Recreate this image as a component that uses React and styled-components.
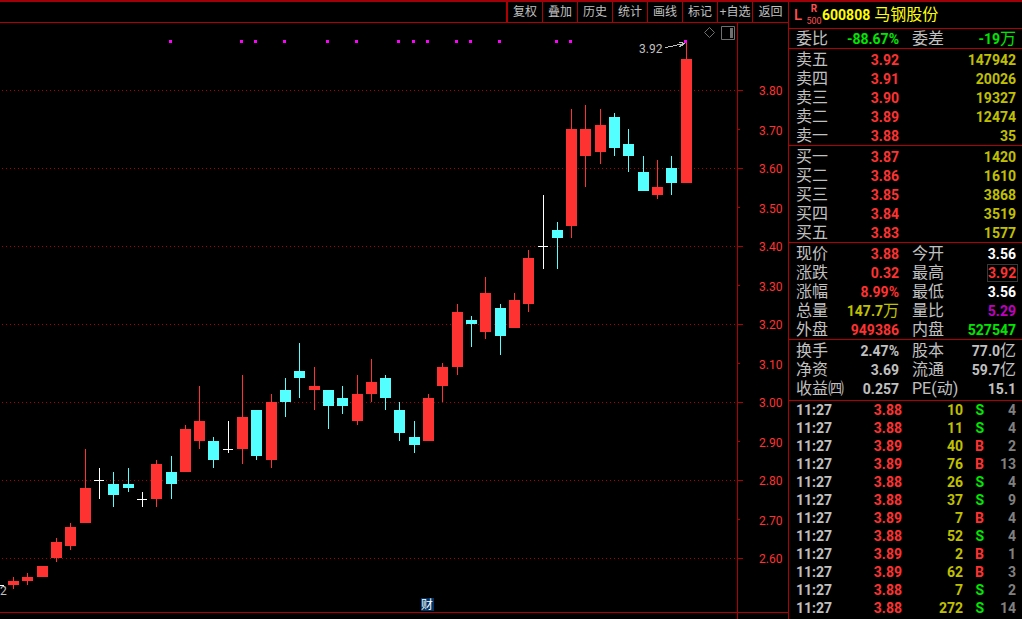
import React, { useState } from 'react';
import styled, { createGlobalStyle } from 'styled-components';

const LINE = '#b00000';
const RED = '#ff3232';
const CYAN = '#54ffff';
const YELLOW = '#c0c000';
const GREEN = '#00e600';
const GRAY = '#c0c0c0';
const PURPLE = '#c000c0';

const GlobalStyle = createGlobalStyle`
    * {
        box-sizing: border-box;
    }
    body {
        margin: 0;
        background: #000;
        color: ${GRAY};
        font-family: Roboto, "Noto Sans CJK SC", sans-serif;
        font-size: 14px;
    }
`;

const Screen = styled.div`
    display: flex;
    min-height: 100vh;
    border-top: 2px solid #a00008;
`;

const Main = styled.main`
    flex: 1;
    min-width: 0;
    display: flex;
    flex-direction: column;
`;

const Toolbar = styled.nav`
    display: flex;
    justify-content: flex-end;
    height: 21px;
    border-bottom: 1px solid ${LINE};
`;

const ToolButton = styled.button`
    width: 35px;
    padding: 0;
    border: 0;
    border-left: 1px solid ${LINE};
    background: none;
    color: ${GRAY};
    font: 12px/20px "Liberation Sans", "Noto Sans CJK SC", sans-serif;
    white-space: nowrap;
    cursor: pointer;
    &:first-child {
        width: 36px;
        border-left-width: 2px;
    }
    &:last-child {
        width: 36px;
    }
`;

const ChartArea = styled.section`
    position: relative;
    flex: 1;
    svg {
        display: block;
    }
`;

const Chart = styled.svg`
    width: 100%;
    text {
        font: 12px Roboto, "Noto Sans CJK SC", sans-serif;
    }
`;

// petits boutons au dessus du graphique
const ChartTools = styled.div`
    position: absolute;
    top: 3px;
    right: 52px;
    display: flex;
    gap: 6px;
    button {
        padding: 0;
        border: 0;
        background: none;
        cursor: pointer;
    }
`;

const Side = styled.aside`
    width: 234px;
    border-left: 1px solid ${LINE};
`;

const Header = styled.h1`
    display: flex;
    align-items: center;
    height: 27px;
    margin: 0;
    padding-left: 5px;
    border-bottom: 1px solid ${LINE};
    color: #ffff00;
    font-size: 14px;
    line-height: 26px;
`;

const Flag = styled.span`
    width: 12px;
    color: #ff5050;
    font-size: 15px;
    font-weight: 500;
`;

const Margin = styled.span`
    display: flex;
    flex-direction: column;
    align-items: center;
    width: 16px;
    color: #ff5050;
    font-size: 9px;
    font-weight: 400;
    line-height: 12px;
    b {
        font-size: 10px;
        line-height: 12px;
    }
`;

const StockName = styled.span`
    margin-left: 4px;
    font-size: 16px;
    font-weight: 400;
`;

const Block = styled.div`
    padding: ${(props) => props.$pad || '1px 6px 0 7px'};
    border-bottom: 1px solid ${LINE};
`;

const Table = styled.table`
    width: 100%;
    table-layout: fixed;
    border-collapse: collapse;
    th, td {
        height: 19px;
        padding: 0;
        line-height: 18px;
        white-space: nowrap;
    }
`;

const Label = styled.th`
    width: 48px;
    font-size: 16px;
    font-weight: 400;
    text-align: left;
`;

const Value = styled.td`
    width: ${(props) => props.$w || 'auto'};
    color: ${(props) => props.$color || GRAY};
    font-weight: 700;
    text-align: ${(props) => props.$align || 'right'};
`;

const Gap = styled.td`
    width: 13px;
`;

const Unit = styled.span`
    font-size: 16px;
    font-weight: 400;
`;

const Boxed = styled.span`
    display: block;
    width: 31px;
    height: 18px;
    margin: 0 -2px 0 auto;
    padding-right: 1px;
    border: 1px solid #383838;
    line-height: 16px;
`;

const Trades = styled(Table)`
    td {
        height: 18px;
        line-height: 18px;
    }
`;

const TradeBlock = styled.div`
    padding: 0 6px 0 7px;
`;

const tools = ['复权', '叠加', '历史', '统计', '画线', '标记', '+自选', '返回'];

// [type, x, open/close haut, open/close bas, plus haut, plus bas]
const candles = [
    ['r', 8, 581, 585, 577, 589],
    ['r', 22, 577, 581, 573, 585],
    ['r', 37, 566, 577, 566, 577],
    ['r', 51, 542, 558, 538, 562],
    ['r', 65, 527, 546, 523, 550],
    ['r', 80, 488, 523, 449, 523],
    ['w', 94, 480, 481, 468, 499],
    ['c', 108, 484, 495, 472, 507],
    ['c', 123, 484, 488, 468, 492],
    ['w', 137, 499, 500, 492, 507],
    ['r', 151, 464, 499, 460, 507],
    ['c', 166, 472, 484, 456, 499],
    ['r', 180, 429, 472, 425, 472],
    ['r', 194, 421, 441, 386, 449],
    ['c', 208, 441, 460, 437, 468],
    ['w', 223, 449, 450, 421, 453],
    ['r', 237, 417, 449, 375, 464],
    ['c', 251, 410, 456, 410, 460],
    ['r', 266, 402, 460, 394, 468],
    ['c', 280, 390, 402, 378, 417],
    ['c', 294, 371, 378, 343, 398],
    ['r', 309, 386, 390, 367, 410],
    ['c', 323, 390, 406, 390, 429],
    ['c', 337, 398, 406, 386, 414],
    ['r', 352, 394, 421, 375, 425],
    ['r', 366, 382, 394, 359, 402],
    ['c', 380, 378, 398, 375, 410],
    ['c', 394, 410, 433, 402, 441],
    ['c', 409, 437, 445, 421, 453],
    ['r', 423, 398, 441, 394, 441],
    ['r', 437, 367, 386, 363, 402],
    ['r', 452, 312, 367, 304, 375],
    ['c', 466, 320, 324, 316, 347],
    ['r', 480, 293, 332, 277, 339],
    ['c', 495, 308, 336, 304, 355],
    ['r', 509, 300, 328, 293, 328],
    ['r', 523, 258, 304, 250, 312],
    ['w', 538, 246, 247, 195, 269],
    ['c', 552, 230, 238, 222, 269],
    ['r', 566, 129, 226, 109, 238],
    ['r', 580, 129, 156, 105, 187],
    ['r', 595, 125, 152, 109, 164],
    ['c', 609, 117, 148, 113, 156],
    ['c', 623, 144, 156, 129, 172],
    ['c', 638, 172, 191, 156, 191],
    ['r', 652, 187, 195, 160, 199],
    ['c', 666, 168, 183, 156, 195],
    ['r', 681, 59, 183, 41, 183],
];

const dots = [169, 240, 254, 283, 326, 355, 397, 412, 426, 455, 469, 498, 555, 569, 684];

const candleColors = { r: RED, c: CYAN, w: '#ffffff' };

const sells = [
    ['卖五', '3.92', '147942'],
    ['卖四', '3.91', '20026'],
    ['卖三', '3.90', '19327'],
    ['卖二', '3.89', '12474'],
    ['卖一', '3.88', '35'],
];

const buys = [
    ['买一', '3.87', '1420'],
    ['买二', '3.86', '1610'],
    ['买三', '3.85', '3868'],
    ['买四', '3.84', '3519'],
    ['买五', '3.83', '1577'],
];

const summary = [
    [{ label: '委比', value: '-88.67%', color: GREEN }, { label: '委差', value: '-19', unit: '万', color: GREEN }],
];

const quotes = [
    [{ label: '现价', value: '3.88', color: RED }, { label: '今开', value: '3.56', color: '#fff' }],
    [{ label: '涨跌', value: '0.32', color: RED }, { label: '最高', value: '3.92', color: RED, boxed: true }],
    [{ label: '涨幅', value: '8.99%', color: RED }, { label: '最低', value: '3.56', color: '#fff' }],
    [{ label: '总量', value: '147.7', unit: '万', color: YELLOW }, { label: '量比', value: '5.29', color: PURPLE }],
    [{ label: '外盘', value: '949386', color: RED }, { label: '内盘', value: '527547', color: GREEN }],
];

const basics = [
    [{ label: '换手', value: '2.47%' }, { label: '股本', value: '77.0', unit: '亿' }],
    [{ label: '净资', value: '3.69' }, { label: '流通', value: '59.7', unit: '亿' }],
    [{ label: '收益㈣', value: '0.257' }, { label: 'PE(动)', value: '15.1' }],
];

const trades = [
    ['3.88', '10', 'S', '4'],
    ['3.88', '11', 'S', '4'],
    ['3.89', '40', 'B', '2'],
    ['3.89', '76', 'B', '13'],
    ['3.88', '26', 'S', '4'],
    ['3.88', '37', 'S', '9'],
    ['3.89', '7', 'B', '4'],
    ['3.88', '52', 'S', '4'],
    ['3.89', '2', 'B', '1'],
    ['3.89', '62', 'B', '3'],
    ['3.88', '7', 'S', '2'],
    ['3.88', '272', 'S', '14'],
];

const Candle = ({ data }) => {
    const [type, x, top, bottom, high, low] = data;
    return (
        <g fill={candleColors[type]}>
            <rect x={x + 5} y={high} width="1" height={low - high} />
            <rect x={x} y={top} width={type === 'w' ? 10 : 11} height={bottom - top} />
        </g>
    );
};

const CandleChart = () => {
    // un niveau tous les 0.10, de 3.80 à 2.60
    const levels = Array.from({ length: 13 }, (_, i) => ({
        price: (3.8 - i / 10).toFixed(2),
        y: 90 + i * 39,
        major: i % 2 === 0,
    }));

    return (
        <Chart viewBox="0 23 788 596" shapeRendering="crispEdges" role="img" aria-label="马钢股份 K线">
            {levels.map((l) => (
                <g key={l.price}>
                    {l.major && <path d={`M2 ${l.y + 0.5}H737`} stroke={LINE} strokeDasharray="1 3" />}
                    <rect x="738" y={l.y} width={l.major ? 5 : 2} height="1" fill={LINE} />
                    <text x="759" y={l.y + (l.major ? 5 : 6)} fill={RED}>{l.price}</text>
                </g>
            ))}
            <rect x="737" y="23" width="1" height="596" fill={LINE} />
            <rect x="0" y="612" width="788" height="1" fill={LINE} />
            <rect x="0" y="585" width="4" height="1" fill="#fff" />
            <text x="0" y="595" fill={GRAY}>2</text>
            {candles.map((c) => <Candle key={c[1]} data={c} />)}
            <text x="639" y="53" fill={GRAY}>3.92</text>
            <path
                d="M665 47.5h3M668 46.5h5M673 45.5h4M677 44.5h5M682 43.5h3M679 42.5h4M682 44.5h2M680 45.5h3M679 46.5h2"
                fill="none"
                stroke={GRAY}
            />
            {dots.map((x) => <rect key={x} x={x} y="40" width="3" height="3" fill="#ff00ff" />)}
            <rect x="421" y="598" width="13" height="13" fill="#003468" />
            <text x="421" y="609" fill="#fff">财</text>
        </Chart>
    );
};

const BookTable = ({ rows }) => (
    <Block>
        <Table>
            <tbody>
                {rows.map(([label, price, volume]) => (
                    <tr key={label}>
                        <Label scope="row">{label}</Label>
                        <Value $w="55px" $color={RED}>{price}</Value>
                        <Value $color={YELLOW}>{volume}</Value>
                    </tr>
                ))}
            </tbody>
        </Table>
    </Block>
);

const QuoteValue = ({ item, width }) => (
    <Value $w={width} $color={item.color}>
        {item.boxed ? <Boxed>{item.value}</Boxed> : item.value}
        {item.unit && <Unit>{item.unit}</Unit>}
    </Value>
);

const QuoteTable = ({ rows, pad }) => (
    <Block $pad={pad}>
        <Table>
            <tbody>
                {rows.map(([left, right]) => (
                    <tr key={left.label}>
                        <Label scope="row">{left.label}</Label>
                        <QuoteValue item={left} width="55px" />
                        <Gap />
                        <Label scope="row">{right.label}</Label>
                        <QuoteValue item={right} />
                    </tr>
                ))}
            </tbody>
        </Table>
    </Block>
);

const App = () => {
    const [showSide, setShowSide] = useState(true);

    return (
        <Screen>
            <GlobalStyle />
            <Main>
                <Toolbar>
                    {tools.map((t) => <ToolButton key={t}>{t}</ToolButton>)}
                </Toolbar>
                <ChartArea>
                    <CandleChart />
                    <ChartTools>
                        <button aria-label="标注">
                            <svg width="11" height="15" viewBox="0 0 11 15" fill="none" stroke="#707070">
                                <path d="M5.5 1.5l5 5-5 5-5-5z" />
                            </svg>
                        </button>
                        <button aria-label="侧栏" onClick={() => setShowSide(!showSide)}>
                            <svg width="15" height="15" viewBox="0 0 15 15" fill="none" stroke="#707070">
                                <path d="M.5.5h13v13H.5z" />
                                <path d="M9 2h3v10H9z" fill="#707070" stroke="none" />
                            </svg>
                        </button>
                    </ChartTools>
                </ChartArea>
            </Main>
            {showSide && (
                <Side>
                    <Header>
                        <Flag>L</Flag>
                        <Margin><b>R</b>500</Margin>
                        600808
                        <StockName>马钢股份</StockName>
                    </Header>
                    <QuoteTable rows={summary} pad="0 6px 0 7px" />
                    <BookTable rows={sells} />
                    <BookTable rows={buys} />
                    <QuoteTable rows={quotes} />
                    <QuoteTable rows={basics} pad="1px 6px 2px 7px" />
                    <TradeBlock>
                        <Trades>
                            <tbody>
                                {trades.map(([price, volume, side, count], i) => (
                                    <tr key={i}>
                                        <Value $w="48px" $align="left">11:27</Value>
                                        <Value $w="58px" $color={RED}>{price}</Value>
                                        <Value $w="61px" $color={YELLOW}>{volume}</Value>
                                        <Value $w="21px" $color={side === 'S' ? GREEN : RED}>{side}</Value>
                                        <Value $color="#808080">{count}</Value>
                                    </tr>
                                ))}
                            </tbody>
                        </Trades>
                    </TradeBlock>
                </Side>
            )}
        </Screen>
    );
};

export default App;
